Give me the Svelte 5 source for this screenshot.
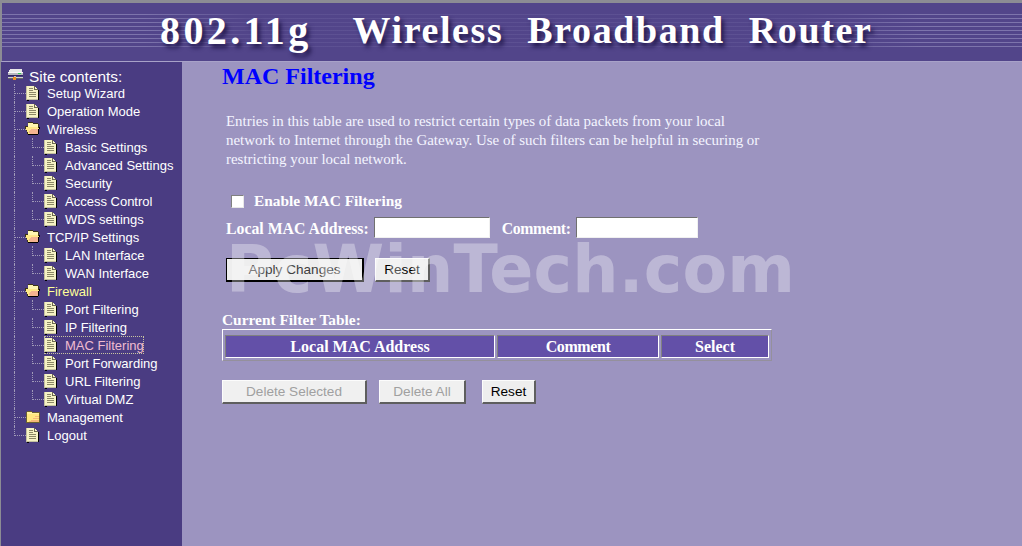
<script lang="ts">
  // Router admin page: MAC filtering, with the site contents tree on the left.
  type Node = { label: string; icon: 'doc' | 'open' | 'closed'; depth: number; last?: boolean; active?: boolean; lit?: boolean };

  const tree: Node[] = [
    { label: 'Setup Wizard', icon: 'doc', depth: 0 },
    { label: 'Operation Mode', icon: 'doc', depth: 0 },
    { label: 'Wireless', icon: 'open', depth: 0 },
    { label: 'Basic Settings', icon: 'doc', depth: 1 },
    { label: 'Advanced Settings', icon: 'doc', depth: 1 },
    { label: 'Security', icon: 'doc', depth: 1 },
    { label: 'Access Control', icon: 'doc', depth: 1 },
    { label: 'WDS settings', icon: 'doc', depth: 1, last: true },
    { label: 'TCP/IP Settings', icon: 'open', depth: 0 },
    { label: 'LAN Interface', icon: 'doc', depth: 1 },
    { label: 'WAN Interface', icon: 'doc', depth: 1, last: true },
    { label: 'Firewall', icon: 'open', depth: 0, lit: true },
    { label: 'Port Filtering', icon: 'doc', depth: 1 },
    { label: 'IP Filtering', icon: 'doc', depth: 1 },
    { label: 'MAC Filtering', icon: 'doc', depth: 1, active: true },
    { label: 'Port Forwarding', icon: 'doc', depth: 1 },
    { label: 'URL Filtering', icon: 'doc', depth: 1 },
    { label: 'Virtual DMZ', icon: 'doc', depth: 1, last: true },
    { label: 'Management', icon: 'closed', depth: 0 },
    { label: 'Logout', icon: 'doc', depth: 0, last: true },
  ];
</script>

<div class="page">
  <header class="banner">
    <h1><span class="model">802.11g</span><span>Wireless</span><span>Broadband</span><span>Router</span></h1>
  </header>

  <div class="body">
    <nav class="side">
      <div class="root">
        <svg width="16" height="16" viewBox="0 0 16 16" shape-rendering="crispEdges">
          <path d="M3 1h12v1H3zM2 2h13v2H2z" fill="#e8e8e8" />
          <path d="M1 4h15v3H1z" fill="#b8b8c0" />
          <path d="M1 4h15v1H1z" fill="#f8f8f8" />
          <path d="M11 5h3v1h-3z" fill="#30d050" />
          <path d="M1 7h15v1H1z" fill="#302860" />
          <path d="M1 9h15v1H1z" fill="#d0d0d0" />
          <path d="M1 10h15v1H1z" fill="#686868" />
          <path d="M7 8h2v1H7z" fill="#c0c0c0" />
          <path d="M6 9h3v3H6z" fill="#f09020" />
        </svg>
        <span>Site contents:</span>
      </div>
      <ul>
        {#each tree as n}
          <li class="node" class:sub={n.depth === 1} class:last={n.last} class:top={n.depth === 0}>
            <a href="#top" class="item" class:active={n.active} class:lit={n.lit}>
              {#if n.icon === 'doc'}
                <svg class="ico" width="14" height="16" viewBox="0 0 14 16" shape-rendering="crispEdges">
                  <path d="M1 1h8v1h1v1h1v1h1v1h1v10H3v1H1z" fill="#000" />
                  <path d="M0 1h9v1h1v1h1v1h1v11H0z" fill="#f6f2c4" />
                  <path d="M0 1h1v14H0zM0 14h12v1H0z" fill="#c4c0a0" />
                  <path d="M3 3h4v1H3zM3 5h4v1H3zM3 7h7v1H3zM3 9h7v1H3zM3 11h7v1H3z" fill="#8c8866" />
                  <path d="M8 1h1v3h3v1H8z" fill="#6c6850" />
                </svg>
              {:else if n.icon === 'open'}
                <svg class="ico folder" width="16" height="14" viewBox="0 0 16 14" shape-rendering="crispEdges">
                  <path d="M3 0h5v1h5v1h1v3h1v2h-1v5h-1v1H3v-1H2V9H1V7H0V4h3z" fill="#3c3418" />
                  <path d="M14 5h1v2h-1v5h-1v1H3v-1h10V7h1z" fill="#000" />
                  <path d="M3 1h5v1h5v3H3z" fill="#fff6b0" />
                  <path d="M1 5h12v1h1v1h-1v5H3v-2H2V8H1z" fill="#ffe888" />
                  <path d="M6 7h7v1H6zM5 8h8v1H5zM4 9h9v1H4zM4 10h9v1H4zM5 11h8v1H5z" fill="#f4b490" />
                </svg>
              {:else}
                <svg class="ico folder" width="16" height="14" viewBox="0 0 16 14" shape-rendering="crispEdges">
                  <path d="M2 1h5v1h8v11H1V2h1z" fill="#6a6030" />
                  <path d="M2 2h5v1h7v1H2z" fill="#fff0a0" />
                  <path d="M2 4h12v8H2z" fill="#ffe880" />
                  <path d="M10 6h4v1h-4zM8 8h6v1H8zM6 10h8v1H6zM4 11h10v1H4z" fill="#f6b878" />
                </svg>
              {/if}
              <span class="label">{n.label}</span>
            </a>
          </li>
        {/each}
      </ul>
    </nav>

    <main class="content">
      <h2>MAC Filtering</h2>
      <p class="intro">
        Entries in this table are used to restrict certain types of data packets from your local<br />
        network to Internet through the Gateway. Use of such filters can be helpful in securing or<br />
        restricting your local network.
      </p>

      <form class="filter" onsubmit={(e) => e.preventDefault()}>
        <label class="enable"><input type="checkbox" /><b>Enable MAC Filtering</b></label>
        <div class="fields">
          <label><b>Local MAC Address:</b><input class="mac" type="text" /></label>
          <label><b class="tight">Comment:</b><input class="note" type="text" /></label>
        </div>
        <div class="actions">
          <button type="submit" class="apply">Apply Changes</button>
          <button type="reset" class="reset1">Reset</button>
        </div>

        <div class="caption"><b>Current Filter Table:</b></div>
        <table>
          <thead>
            <tr>
              <th class="c1">Local MAC Address</th>
              <th class="c2"><span class="tight">Comment</span></th>
              <th class="c3">Select</th>
            </tr>
          </thead>
        </table>

        <div class="actions lower">
          <button type="button" disabled class="del1">Delete Selected</button>
          <button type="button" disabled class="del2">Delete All</button>
          <button type="reset" class="reset2">Reset</button>
        </div>
      </form>

      <div class="watermark">PcWinTech.com</div>
    </main>
  </div>
</div>

<style>
  :global(body) {
    margin: 0;
    background: #9c94c0;
  }
  .page {
    width: 1022px;
    height: 546px;
    overflow: hidden;
    display: flex;
    flex-direction: column;
  }
  .banner {
    height: 62px;
    box-sizing: border-box;
    border-top: 3px solid #8c8c94;
    border-left: 2px solid #8c8c94;
    border-bottom: 1px solid #a8a2c8;
    background-color: #52458a;
    /* stripes fade behind the title */
    background-image:
      linear-gradient(90deg, transparent 14%, #52458ac0 24%, #52458ac0 78%, transparent 90%),
      repeating-linear-gradient(#7d74ac 0 1px, transparent 1px 4px);
    background-repeat: no-repeat;
    background-size: 100% 36px;
    background-position: 0 11px;
    display: flex;
  }
  h1 {
    margin: 0 0 0 158px;
    font: bold 38px/55px "Liberation Serif", serif;
    letter-spacing: 1.6px;
    color: #fff;
    white-space: nowrap;
    text-shadow: 3px 4px 4px #241a50;
    display: flex;
    gap: 24px;
  }
  .model {
    font-size: 40px;
    letter-spacing: 3.4px;
    margin-right: 17px;
  }
  .body {
    flex: 1;
    display: flex;
    min-height: 0;
  }
  .side {
    width: 182px;
    flex: none;
    box-sizing: border-box;
    background: #4a3c82;
    border-left: 1px solid #8c8c94;
    padding: 6px 0 0 6px;
    font: 13px/18px "Liberation Sans", sans-serif;
    color: #fff;
  }
  .root {
    height: 16px;
    display: flex;
    align-items: center;
    gap: 6px;
    font-size: 15.4px;
  }
  .root span {
    padding-top: 2px;
  }
  ul {
    list-style: none;
    margin: 0;
    padding: 0;
  }
  .node {
    position: relative;
    height: 18px;
    padding-left: 19px;
  }
  .node.sub {
    padding-left: 37px;
  }
  /* dotted tree connectors */
  .node::before {
    content: '';
    position: absolute;
    left: 7px;
    top: 0;
    width: 11px;
    height: 9px;
    border-left: 1px dotted #a09ab8;
    border-bottom: 1px dotted #a09ab8;
  }
  .node.sub::before {
    left: 25px;
  }
  .node.sub::after {
    content: '';
    position: absolute;
    left: 7px;
    top: 0;
    height: 18px;
    border-left: 1px dotted #a09ab8;
  }
  .node.top:not(.last)::after {
    content: '';
    position: absolute;
    left: 7px;
    top: 9px;
    height: 9px;
    border-left: 1px dotted #a09ab8;
  }
  .item {
    display: inline-flex;
    align-items: center;
    height: 18px;
    color: #fff;
    text-decoration: none;
    white-space: nowrap;
  }
  .label {
    padding-top: 2px;
  }
  .ico {
    margin-right: 7px;
    flex: none;
  }
  .ico.folder {
    margin-right: 6px;
    margin-left: -1px;
  }
  .lit {
    color: #ffff99;
  }
  .active {
    color: #f0bcd0;
    outline: 1px dotted #c8c4a0;
    outline-offset: -1px;
  }
  .content {
    position: relative;
    flex: 1;
    background: #9c94c0;
    padding-left: 40px;
    font-family: "Liberation Serif", serif;
    color: #fff;
  }
  h2 {
    margin: 0;
    padding-top: 1px;
    font-size: 24px;
    line-height: 27px;
    color: #0000ff;
  }
  .intro {
    margin: 22px 0 0 4px;
    font-size: 14.95px;
    line-height: 19px;
    color: #f4f4ff;
  }
  .enable {
    display: flex;
    align-items: center;
    margin: 23px 0 0 9px;
    height: 18px;
    font-size: 15.4px;
  }
  .enable input {
    appearance: none;
    width: 13px;
    height: 13px;
    margin: 0 10px 0 0;
    box-sizing: border-box;
    background: #fff;
    border: 1px solid;
    border-color: #808080 #e8e8e8 #e8e8e8 #808080;
  }
  .fields {
    display: flex;
    margin: 6px 0 0 4px;
    font-size: 15.8px;
    gap: 12px;
    height: 23px;
    align-items: center;
  }
  .fields label {
    display: flex;
    align-items: center;
    gap: 5px;
  }
  .fields b {
    padding-top: 2px;
  }
  .tight {
    letter-spacing: -0.4px;
  }
  .fields input {
    height: 21px;
    box-sizing: border-box;
    background: #fff;
    border: 1px solid;
    border-color: #707070 #f0f0f0 #f0f0f0 #707070;
    padding: 0;
  }
  .mac {
    width: 116px;
  }
  .note {
    width: 122px;
  }
  .actions {
    display: flex;
    margin: 19px 0 0 4px;
  }
  button {
    height: 24px;
    box-sizing: border-box;
    padding: 0;
    background: #eeeeee;
    border: 1px solid;
    border-color: #fcfcfc #5e5e5e #5e5e5e #fcfcfc;
    border-width: 1px 2px 2px 1px;
    font: 13.6px "Liberation Sans", sans-serif;
    color: #000;
  }
  button:disabled {
    color: #a0a0a0;
    background: #f0f0f0;
  }
  .apply {
    width: 138px;
    color: #404040;
    border: 1px solid #000;
    border-width: 1px 2px 2px 1px;
  }
  .reset1 {
    width: 55px;
    margin-left: 11px;
  }
  .caption {
    margin: 29px 0 0 0;
    font-size: 15.4px;
    line-height: 17px;
  }
  table {
    width: 550px;
    margin-top: 1px;
    border-collapse: separate;
    border-spacing: 2px;
    box-sizing: border-box;
    border: 1px solid;
    border-color: #fff #94909c #94909c #fff;
    padding: 3px 0 0 0;
  }
  th {
    height: 23px;
    box-sizing: border-box;
    padding: 0;
    background: #6350a8;
    border: 1px solid;
    border-color: #808080 #fff #fff #808080;
    font-size: 16px;
    color: #fff;
  }
  .c1 {
    width: 270px;
  }
  .c2 {
    width: 162px;
  }
  .c3 {
    width: 108px;
  }
  .lower {
    margin: 19px 0 0 0;
  }
  .del1 {
    width: 145px;
  }
  .del2 {
    width: 87px;
    margin-left: 12px;
  }
  .reset2 {
    width: 54px;
    margin-left: 16px;
  }
  .watermark {
    position: absolute;
    left: 44px;
    top: 163px;
    font: bold 65px/90px "DejaVu Sans", sans-serif;
    letter-spacing: 0.2px;
    color: rgba(255, 255, 255, 0.33);
    white-space: nowrap;
    pointer-events: none;
  }
</style>
